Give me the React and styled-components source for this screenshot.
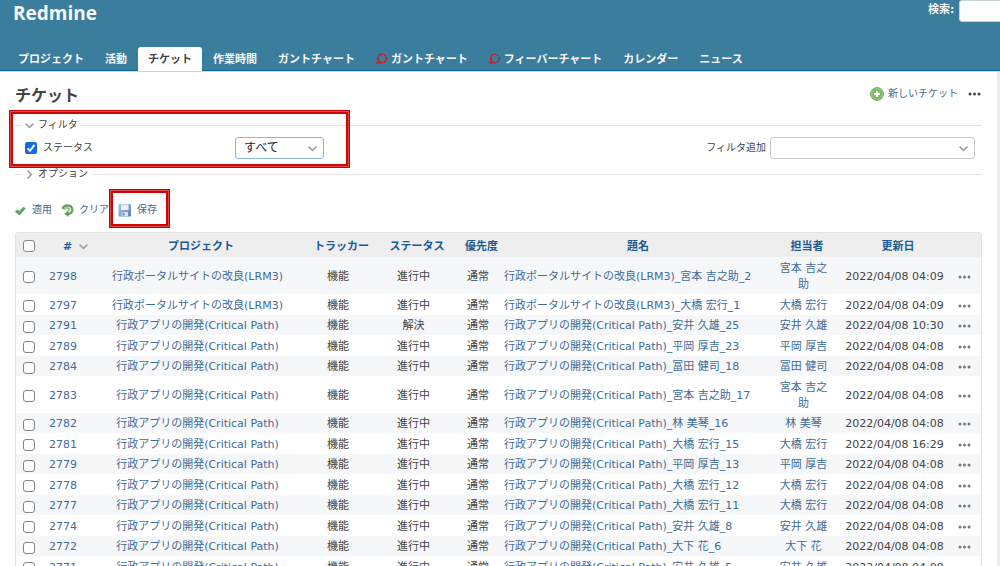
import React from "react";
import styled, { createGlobalStyle, css } from "styled-components";

const GlobalStyle = createGlobalStyle`
  * { box-sizing: border-box; }
  body {
    margin: 0;
    background: #fff;
    color: #444;
    font-family: "DejaVu Sans", "Noto Sans CJK JP", sans-serif;
    font-size: 11px;
    line-height: 16px;
  }
`;

const Page = styled.div`
  display: flex;
  flex-direction: column;
  height: 100vh;
  overflow: hidden;
`;

const Header = styled.header`
  flex: none;
  display: flex;
  flex-direction: column;
  justify-content: space-between;
  height: 72px;
  background: #3b7d9c;
  border-bottom: 1px solid #c3d7e0;
  box-shadow: inset 0 -1px 0 #0b6a94;
  overflow: hidden;
`;

const HeaderTop = styled.div`
  display: flex;
  justify-content: space-between;
  align-items: flex-start;
  padding-left: 13px;
`;

const Logo = styled.h1`
  margin: 0;
  color: #f8f8f8;
  font: 700 19px/26px "Open Sans", sans-serif;
`;

const Search = styled.form`
  display: flex;
  flex: none;
  gap: 5px;
  width: 72px;
  color: #f8f8f8;
  font-weight: 700;
  line-height: 20px;
  white-space: nowrap;
`;

const SearchInput = styled.input`
  flex: 0 0 100px;
  width: 100px;
  height: 22px;
  border: 1px solid #c9d3d8;
  border-radius: 3px;
  background: #fff;
`;

const Tabs = styled.nav`
  display: flex;
  gap: 1px;
  padding-left: 8px;
`;

const Tab = styled.a`
  display: flex;
  align-items: center;
  gap: 4px;
  height: 24px;
  padding: 2px 10px 0;
  border-radius: 3px 3px 0 0;
  color: ${(p) => (p.$active ? "#444" : "#f8f8f8")};
  background: ${(p) => (p.$active ? "#fff" : "transparent")};
  font-weight: 700;
  text-decoration: none;
  white-space: nowrap;
`;

const Main = styled.div`
  display: flex;
  flex: 1;
  min-height: 0;
  background: #ececec;
  padding-right: 3px;
`;

const Content = styled.main`
  flex: 1;
  min-width: 0;
  padding: 14px 15px 0;
  background: #fff;
`;

const TitleRow = styled.div`
  display: flex;
  justify-content: space-between;
  align-items: center;
  height: 20px;
  margin-bottom: 11px;
`;

const Title = styled.h2`
  margin: 0;
  font-size: 16px;
  line-height: 20px;
`;

const Actions = styled.div`
  display: flex;
  align-items: center;
  gap: 8px;
  padding-bottom: 5px;
`;

const linkColor = css`
  color: #406c97;
  text-decoration: none;
`;

const IconLink = styled.a`
  ${linkColor}
  position: relative;
  display: flex;
  align-items: center;
  gap: ${(p) => p.$gap || 4}px;
  font-size: 10px;
  white-space: nowrap;
`;

const MoreButton = styled.button`
  display: flex;
  align-items: center;
  justify-content: center;
  width: 16px;
  height: 12px;
  padding: 0;
  border: 0;
  background: none;
`;

const Filters = styled.div`
  position: relative;
`;

const Fieldset = styled.fieldset`
  min-width: 0;
  height: ${(p) => (p.$open ? 49 : 16)}px;
  margin: 0;
  padding: 4px 7px 0 10px;
  border: 0 solid #e4e4e4;
  border-top-width: 1px;
`;

const Legend = styled.legend`
  display: flex;
  align-items: center;
  gap: 4px;
  margin-left: -3px;
  padding: 0 3px;
  font-size: 10px;
  line-height: 16px;
`;

const FilterRow = styled.div`
  display: flex;
  justify-content: space-between;
`;

const FilterItem = styled.div`
  display: flex;
  align-items: center;
  gap: 4px;
  font-size: 10px;
`;

const StatusLabel = styled.label`
  display: flex;
  align-items: center;
  gap: 6px;
  width: 206px;
`;

const SelectBox = styled.div`
  display: grid;
  align-items: center;
  width: ${(p) => p.$width}px;
  & > * { grid-area: 1 / 1; }
  & > svg { justify-self: end; margin-right: 7px; pointer-events: none; }
`;

const Select = styled.select`
  appearance: none;
  width: 100%;
  height: 22px;
  padding: 0 8px;
  border: 1px solid ${(p) => (p.$focused ? "#8bb4de" : "#c8c8c8")};
  border-radius: 3px;
  background: #fff;
  color: #222;
  font: 12px/20px "DejaVu Sans", "Noto Sans CJK JP", sans-serif;
`;

const Checkbox = styled.input`
  appearance: none;
  display: block;
  flex: none;
  width: 12px;
  height: 12px;
  margin: 0;
  border: 1px solid #858585;
  border-radius: 3px;
  background: #fff;
`;

const CheckedBox = styled.span`
  display: grid;
  & > * { grid-area: 1 / 1; }
  & > input { border-color: #1467e8; background: #1467e8; border-radius: 2px; }
  & > svg { z-index: 1; pointer-events: none; }
`;

const Buttons = styled.div`
  display: flex;
  gap: 9px;
  height: 16px;
  margin: 16px 0 14px;
`;

const Highlight = styled.span`
  position: absolute;
  top: ${(p) => p.$top}px;
  left: ${(p) => p.$left}px;
  width: ${(p) => p.$width}px;
  height: ${(p) => p.$height}px;
  border: 1px solid #c90000;
  box-shadow: inset 0 0 0 1px #df4a42, inset 0 0 0 3px #cd0505;
  pointer-events: none;
`;

const Table = styled.table`
  width: 100%;
  table-layout: fixed;
  border-spacing: 0;
  border: 1px solid #e2e2e2;
  border-radius: 3px 3px 0 0;
`;

const Col = styled.col`
  width: ${(p) => (p.$width ? `${p.$width}px` : "auto")};
`;

const Th = styled.th`
  height: 24px;
  padding: 3px 4px 0;
  background: #eee;
  color: #1d5a92;
  font-weight: 700;
  text-align: center;
  white-space: nowrap;
`;

const SortLink = styled.a`
  display: inline-flex;
  align-items: center;
  gap: 7px;
  margin-left: ${(p) => (p.$sorted ? 18 : 0)}px;
  color: inherit;
  text-decoration: none;
`;

const Td = styled.td`
  padding: 3px 9px 1px 2px;
  text-align: ${(p) => p.$align || "center"};
  vertical-align: middle;
  white-space: ${(p) => (p.$wrap ? "normal" : "nowrap")};
`;

const CheckTd = styled(Td)`
  padding: 4px 0 1px 7px;
`;

const ToolTd = styled(Td)`
  padding: 3px 0 1px;
`;

const Row = styled.tr`
  background: #fff;
  &:nth-child(odd) { background: #f6f7f8; }
  &:nth-child(even) td, &:first-child td { padding-top: 4px; }
`;

const Link = styled.a`
  ${linkColor}
`;

const Chevron = ({ right }) => (
  <svg width="9" height="9" viewBox="0 0 9 9" fill="none" stroke="#a2a2a2" strokeWidth="1.7">
    <path d={right ? "M2.5 .5 6.3 4.5 2.5 8.5" : "M.6 2.6 4.5 6.3 8.4 2.6"} />
  </svg>
);

const Dots = ({ color = "#777" }) => (
  <svg width="13" height="4" viewBox="0 0 13 4" fill={color}>
    <circle cx="2" cy="2" r="1.5" />
    <circle cx="6.5" cy="2" r="1.5" />
    <circle cx="11" cy="2" r="1.5" />
  </svg>
);

const DottedRing = () => (
  <svg width="11" height="14" viewBox="0 0 11 14" fill="none" stroke="#e01212">
    <circle cx="6" cy="5.5" r="4.3" strokeWidth="1.5" strokeDasharray="2 .7" />
    <path d="M1.9 4.2v4.4M.3 10h4" strokeWidth="1.6" />
  </svg>
);

const AddIcon = () => (
  <svg width="14" height="14" viewBox="0 0 14 14">
    <circle cx="7" cy="7" r="6.4" fill="#79b765" stroke="#6fab62" />
    <circle cx="7" cy="7" r="5.3" fill="none" stroke="#a6d193" strokeWidth=".8" />
    <path d="M7 4v6M4 7h6" stroke="#fff" strokeWidth="2.2" />
  </svg>
);

const ApplyIcon = () => (
  <svg width="12" height="12" viewBox="0 0 12 12">
    <path d="M.3 7.8 2.3 5.8 4.3 7.4 8.6 3.1 10.2 4.7 4.5 11Z" fill="#62a45b" stroke="#559a50" strokeWidth=".7" />
  </svg>
);

const ClearIcon = () => (
  <svg width="13" height="14" viewBox="0 0 13 14" fill="none">
    <path d="M1.8 6C2.2 3.6 4.3 2.5 6.5 2.5c3 0 4.8 1.9 4.8 4.2S9.600 10.900 7 10.900" stroke="#65a45c" strokeWidth="2.4" />
    <path d="M3.200 10.800 7.500 7.600v6.400Z" fill="#5d9f55" />
    <path d="M3.500 6.800c.6-1.700 2-2.200 3.100-2 1.300.2 1.900 1.200 1.500 2.300-.3.800-.9 1.100-1.700 1.100" stroke="#86b87c" strokeWidth="1.600" />
  </svg>
);

const SaveIcon = () => (
  <svg width="14" height="14" viewBox="0 0 14 14">
    <defs>
      <linearGradient id="disk" x1="0" y1="0" x2="1" y2="1">
        <stop offset="0" stopColor="#a9c5e8" />
        <stop offset="1" stopColor="#5481bd" />
      </linearGradient>
    </defs>
    <rect x=".5" y="1" width="12.5" height="12.500" rx="1" fill="url(#disk)" />
    <rect x="3" y="1.500" width="7.500" height="5.500" fill="#e9f0f9" />
    <rect x="3.500" y="9" width="6.500" height="4" fill="#d5e2f2" />
    <rect x="4.500" y="9.600" width="2" height="3" fill="#6d93c6" />
  </svg>
);

const Tick = () => (
  <svg width="12" height="12" viewBox="0 0 12 12" fill="none" stroke="#fff" strokeWidth="1.9">
    <path d="M2.5 6.3 5 8.8 9.5 2.9" />
  </svg>
);

const tabs = [
  { label: "プロジェクト" },
  { label: "活動" },
  { label: "チケット", active: true },
  { label: "作業時間" },
  { label: "ガントチャート" },
  { label: "ガントチャート", ring: true },
  { label: "フィーバーチャート", ring: true },
  { label: "カレンダー" },
  { label: "ニュース" },
];

const headings = ["プロジェクト", "トラッカー", "ステータス", "優先度", "題名", "担当者", "更新日"];
const widths = [25, 51, 218, 63, 88, 41, 0, 66, 116, 25];

const PORTAL = "行政ポータルサイトの改良(LRM3)";
const APP = "行政アプリの開発(Critical Path)";

const issues = [
  [2798, PORTAL, "進行中", "宮本 吉之助", 2, "04:09"],
  [2797, PORTAL, "進行中", "大橋 宏行", 1, "04:09"],
  [2791, APP, "解決", "安井 久雄", 25, "10:30"],
  [2789, APP, "進行中", "平岡 厚吉", 23, "04:08"],
  [2784, APP, "進行中", "冨田 健司", 18, "04:08"],
  [2783, APP, "進行中", "宮本 吉之助", 17, "04:08"],
  [2782, APP, "進行中", "林 美琴", 16, "04:08"],
  [2781, APP, "進行中", "大橋 宏行", 15, "16:29"],
  [2779, APP, "進行中", "平岡 厚吉", 13, "04:08"],
  [2778, APP, "進行中", "大橋 宏行", 12, "04:08"],
  [2777, APP, "進行中", "大橋 宏行", 11, "04:08"],
  [2774, APP, "進行中", "安井 久雄", 8, "04:08"],
  [2772, APP, "進行中", "大下 花", 6, "04:08"],
  [2771, APP, "進行中", "安井 久雄", 5, "04:08"],
];

function IssueRow({ issue }) {
  const [id, project, status, assignee, number, time] = issue;
  return (
    <Row>
      <CheckTd><Checkbox type="checkbox" aria-label={`#${id}`} /></CheckTd>
      <Td><Link href="#">{id}</Link></Td>
      <Td><Link href="#">{project}</Link></Td>
      <Td>機能</Td>
      <Td>{status}</Td>
      <Td>通常</Td>
      <Td $align="left"><Link href="#">{`${project}_${assignee}_${number}`}</Link></Td>
      <Td $wrap><Link href="#">{assignee}</Link></Td>
      <Td>{`2022/04/08 ${time}`}</Td>
      <ToolTd><MoreButton type="button" aria-label="操作"><Dots /></MoreButton></ToolTd>
    </Row>
  );
}

const CheckTh = styled(Th)`
  padding: 1px 0 0 7px;
`;

export default function App() {
  return (
    <Page>
      <GlobalStyle />
      <Header>
        <HeaderTop>
          <Logo>Redmine</Logo>
          <Search>
            <label htmlFor="q">検索:</label>
            <SearchInput id="q" type="text" />
          </Search>
        </HeaderTop>
        <Tabs>
          {tabs.map((tab, i) => (
            <Tab key={i} href="#" $active={tab.active}>
              {tab.ring && <DottedRing />}
              {tab.label}
            </Tab>
          ))}
        </Tabs>
      </Header>
      <Main>
        <Content>
          <TitleRow>
            <Title>チケット</Title>
            <Actions>
              <IconLink href="#"><AddIcon />新しいチケット</IconLink>
              <MoreButton type="button" aria-label="操作"><Dots color="#444" /></MoreButton>
            </Actions>
          </TitleRow>
          <Filters>
            <Fieldset $open>
              <Legend><Chevron />フィルタ</Legend>
              <FilterRow>
                <FilterItem>
                  <StatusLabel>
                    <CheckedBox><Checkbox type="checkbox" defaultChecked /><Tick /></CheckedBox>
                    ステータス
                  </StatusLabel>
                  <SelectBox $width={89}>
                    <Select $focused aria-label="ステータス"><option>すべて</option></Select>
                    <Chevron />
                  </SelectBox>
                </FilterItem>
                <FilterItem>
                  <label htmlFor="add-filter">フィルタ追加</label>
                  <SelectBox $width={205}>
                    <Select id="add-filter"><option></option></Select>
                    <Chevron />
                  </SelectBox>
                </FilterItem>
              </FilterRow>
            </Fieldset>
            <Fieldset>
              <Legend><Chevron right />オプション</Legend>
            </Fieldset>
            <Highlight $top={-7} $left={-6} $width={341} $height={58} />
          </Filters>
          <Buttons>
            <IconLink href="#" $gap={5}><ApplyIcon />適用</IconLink>
            <IconLink href="#" $gap={5}><ClearIcon />クリア</IconLink>
            <IconLink href="#" $gap={5}>
              <SaveIcon />保存
              <Highlight $top={-13} $left={-9} $width={61} $height={39} />
            </IconLink>
          </Buttons>
          <Table>
            <colgroup>
              {widths.map((w, i) => <Col key={i} $width={w} />)}
            </colgroup>
            <thead>
              <tr>
                <CheckTh><Checkbox type="checkbox" aria-label="すべて選択" /></CheckTh>
                <Th><SortLink href="#" $sorted>#<Chevron /></SortLink></Th>
                {headings.map((h) => <Th key={h}><SortLink href="#">{h}</SortLink></Th>)}
                <Th />
              </tr>
            </thead>
            <tbody>
              {issues.map((issue) => <IssueRow key={issue[0]} issue={issue} />)}
            </tbody>
          </Table>
        </Content>
      </Main>
    </Page>
  );
}
